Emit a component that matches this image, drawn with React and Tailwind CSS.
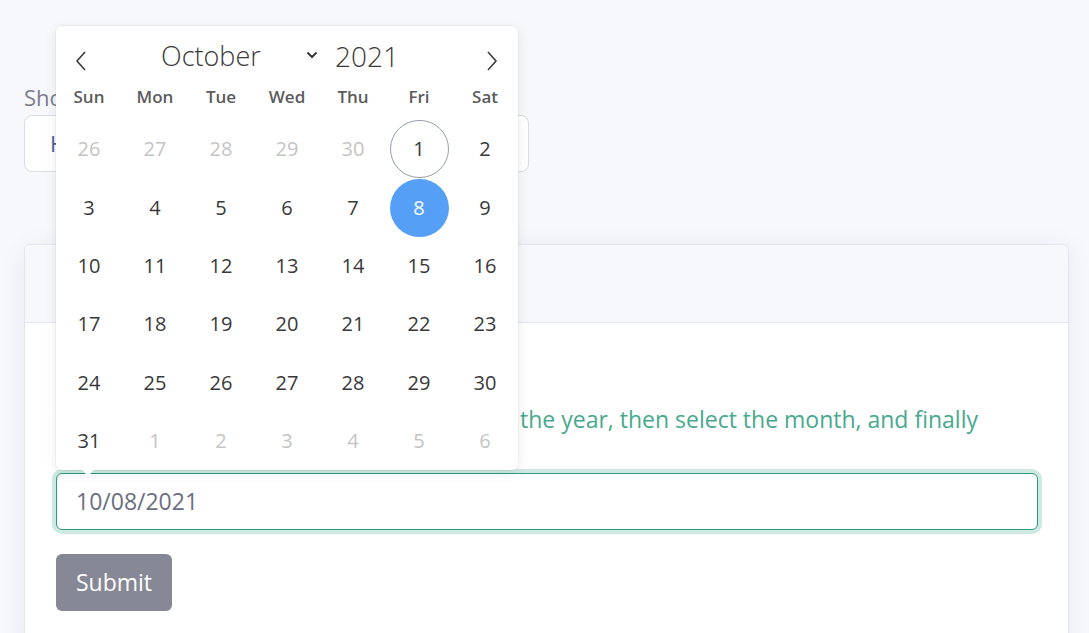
import React from "react";

const weekdays = ["Sun", "Mon", "Tue", "Wed", "Thu", "Fri", "Sat"];
const days = [
  [26, true], [27, true], [28, true], [29, true], [30, true], [1, false, "today"], [2, false],
  [3], [4], [5], [6], [7], [8, false, "sel"], [9],
  [10], [11], [12], [13], [14], [15], [16],
  [17], [18], [19], [20], [21], [22], [23],
  [24], [25], [26], [27], [28], [29], [30],
  [31], [1, true], [2, true], [3, true], [4, true], [5, true], [6, true],
];

function Calendar() {
  return (
    <div className="absolute left-[56px] top-[26px] w-[462px] h-[444px] bg-white rounded-[6px] shadow-[0_3px_13px_rgba(0,0,0,0.08),0_0_0_1px_rgba(0,0,0,0.03)] z-10">
      <div className="absolute left-[26px] bottom-[-6px] w-0 h-0 border-l-[6px] border-r-[6px] border-t-[6px] border-l-transparent border-r-transparent border-t-white" />
      <div className="relative h-[56px]">
        <svg className="absolute left-[19px] top-[25px]" width="12" height="20" viewBox="0 0 12 20">
          <path d="M10 1 L2 10 L10 19" fill="none" stroke="#3c3c3c" strokeWidth="1.6" />
        </svg>
        <div className="absolute left-[105px] top-[10px] text-[27px] font-light text-[#3a3a3a] leading-[40px]">October</div>
        <svg className="absolute left-[250px] top-[25px]" width="12" height="8" viewBox="0 0 12 8">
          <path d="M1.5 1.5 L6 6 L10.5 1.5" fill="none" stroke="#3a3a3a" strokeWidth="2" />
        </svg>
        <div className="absolute left-[279px] top-[10px] text-[28px] font-light text-[#3a3a3a] leading-[40px]">2021</div>
        <svg className="absolute left-[430px] top-[25px]" width="12" height="20" viewBox="0 0 12 20">
          <path d="M2 1 L10 10 L2 19" fill="none" stroke="#3c3c3c" strokeWidth="1.6" />
        </svg>
      </div>
      <div className="grid grid-cols-7 h-[30px] items-center">
        {weekdays.map((w) => (
          <div key={w} className="text-center text-[17px] font-semibold text-[#5b5b5b]">{w}</div>
        ))}
      </div>
      <div className="mt-[8px] grid grid-cols-7 auto-rows-[58.4px]">
        {days.map(([d, muted, kind], i) => (
          <div key={i} className="flex items-center justify-center">
            <div
              className={
                "w-[59px] h-[58px] rounded-full flex items-center justify-center text-[20px] " +
                (kind === "sel"
                  ? "bg-[#569ff7] text-white"
                  : kind === "today"
                  ? "border border-[#959ea9] text-[#393939]"
                  : muted
                  ? "text-[#c4c4c4]"
                  : "text-[#393939]")
              }
            >
              {d}
            </div>
          </div>
        ))}
      </div>
    </div>
  );
}

export default function App() {
  return (
    <div
      className="relative min-h-[633px] w-[1089px] bg-[#f7f8fc] overflow-hidden"
      style={{ fontFamily: "'Open Sans', 'Noto Sans', sans-serif" }}
    >
      <Calendar />
      <div className="pl-[24px] pt-[82px]">
        <div className="text-[22px] leading-[30px] text-[#7b7d8e]">Show dates from</div>
        <div className="mt-[3px] w-[505px] h-[57px] bg-white border border-[#d9dbe6] rounded-[8px] flex items-center justify-between pl-[25px] pr-[10px]">
          <span className="text-[22px] text-[#4b5a9a]">Hide past dates</span>
          <svg width="8" height="6" viewBox="0 0 8 6">
            <path d="M1 1 L4 4 L7 1" fill="none" stroke="#6b6e80" strokeWidth="1.5" />
          </svg>
        </div>
      </div>
      <div className="ml-[24px] mt-[72px] w-[1045px] bg-white border border-[#e2e4ee] rounded-[6px] shadow-[0_4px_24px_rgba(60,64,100,0.08)]">
        <div className="h-[78px] bg-[#f7f8fc] border-b border-[#e2e4ee] rounded-t-[6px] flex items-center px-[32px]">
          <span className="text-[22px] text-[#3a3b4c]">Date picker</span>
        </div>
        <div className="px-[31px] pt-[30px] pb-[40px]">
          <div className="text-[22px] text-[#3a3b4c] leading-[30px]">Choose a date</div>
          <p className="mt-[21px] text-[23px] leading-[30px] text-[#48a98e]">
            <span className="inline-block w-[464px]">To move faster, first</span>the year, then select the month, and finally
            <br />
            select the day.
          </p>
          <div className="mt-[9px] h-[57px] w-[982px] bg-white border border-[#2c9a7c] rounded-[6px] shadow-[0_0_0_4px_#cde9e1] flex items-center px-[19px]">
            <span className="text-[23px] text-[#6b6e80]">10/08/2021</span>
          </div>
          <button className="mt-[24px] h-[57px] w-[116px] bg-[#878896] rounded-[6px] text-white text-[23px] flex items-center justify-center">
            Submit
          </button>
        </div>
      </div>
    </div>
  );
}
